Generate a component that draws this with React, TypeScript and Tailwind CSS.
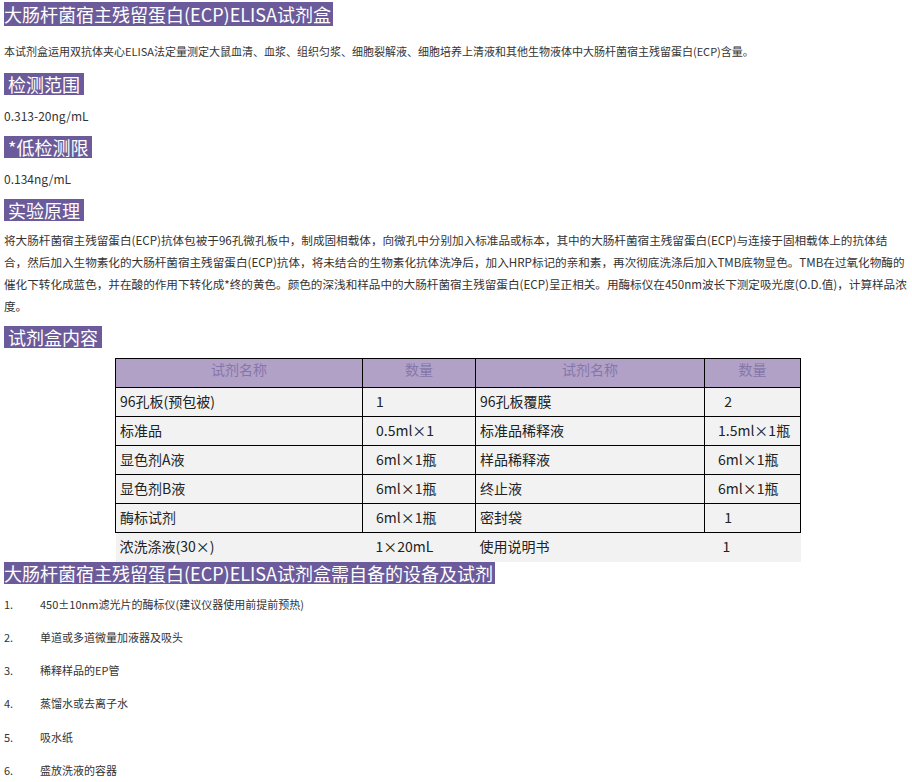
export default function App() {
  const font = { fontFamily: '"Noto Sans CJK SC", "Liberation Sans", sans-serif' }
  const H = ({ t, mt }: { t: string; mt: string }) => (
    <div className={`${mt} h-[22px]`}><span className="bg-[#6b5b9a] text-white text-[18px] leading-[22px] inline-block h-[22px] px-[4px]">{t}</span></div>
  )
  const rows = [
    ["96孔板(预包被)", "1", "96孔板覆膜", "  2"],
    ["标准品", "0.5ml×1", "标准品稀释液", "1.5ml×1瓶"],
    ["显色剂A液", "6ml×1瓶", "样品稀释液", "6ml×1瓶"],
    ["显色剂B液", "6ml×1瓶", "终止液", "6ml×1瓶"],
    ["酶标试剂", "6ml×1瓶", "密封袋", "  1"],
  ]
  const list = ["450±10nm滤光片的酶标仪(建议仪器使用前提前预热)", "单道或多道微量加液器及吸头", "稀释样品的EP管", "蒸馏水或去离子水", "吸水纸", "盛放洗液的容器"]
  return (
    <div className="w-[912px] h-[782px] overflow-hidden bg-white text-[#333] pl-[4px] pt-[2px]" style={font}>
      <div className="h-[24px]"><span className="bg-[#6b5b9a] text-white text-[18px] leading-[24px] inline-block h-[24px] pr-[2px]">大肠杆菌宿主残留蛋白(ECP)ELISA试剂盒</span></div>
      <p className="text-[11px] mt-[17px] leading-[16px] h-[16px]">本试剂盒运用双抗体夹心ELISA法定量测定大鼠血清、血浆、组织匀浆、细胞裂解液、细胞培养上清液和其他生物液体中大肠杆菌宿主残留蛋白(ECP)含量。</p>
      <H t=" 检测范围" mt="mt-[14px]" />
      <p className="text-[12px] mt-[13px] leading-[16px] h-[16px]">0.313-20ng/mL</p>
      <H t=" *低检测限" mt="mt-[12px]" />
      <p className="text-[12px] mt-[13px] leading-[16px] h-[16px]">0.134ng/mL</p>
      <H t=" 实验原理" mt="mt-[12px]" />
      <p className="text-[11.6px] leading-[22px] mt-[8px] pr-[2px] h-[88px]">将大肠杆菌宿主残留蛋白(ECP)抗体包被于96孔微孔板中，制成固相载体，向微孔中分别加入标准品或标本，其中的大肠杆菌宿主残留蛋白(ECP)与连接于固相载体上的抗体结合，然后加入生物素化的大肠杆菌宿主残留蛋白(ECP)抗体，将未结合的生物素化抗体洗净后，加入HRP标记的亲和素，再次彻底洗涤后加入TMB底物显色。TMB在过氧化物酶的催化下转化成蓝色，并在酸的作用下转化成*终的黄色。颜色的深浅和样品中的大肠杆菌宿主残留蛋白(ECP)呈正相关。用酶标仪在450nm波长下测定吸光度(O.D.值)，计算样品浓度。</p>
      <H t=" 试剂盒内容" mt="mt-[9px]" />
      <table className="ml-[111px] mt-[10px] border-collapse text-[14px] text-[#222] leading-[20px]">
        <thead>
          <tr className="bg-[#b2a1c7] text-[#8576aa] h-[29px]">
            {["试剂名称", "数量", "试剂名称", "数量"].map((h, i) => (
              <th key={i} className={`border border-black font-normal align-top ${["w-[247px]", "w-[113px]", "w-[229px]", "w-[96px]"][i]}`}>{h}</th>
            ))}
          </tr>
        </thead>
        <tbody>
          {rows.map((r, i) => (
            <tr key={i} className="bg-[#f2f2f2] h-[29px]">
              {r.map((c, j) => (
                <td key={j} className={`border border-black align-top px-[4px] pt-[3px] whitespace-pre ${j % 2 ? "pl-[13px]" : ""}`}>{c}</td>
              ))}
            </tr>
          ))}
          <tr className="bg-[#f2f2f2] h-[29px]">
            <td className="px-[4px] align-top pt-[3px]">浓洗涤液(30×)</td>
            <td className="pl-[13px] align-top pt-[3px]">1×20mL</td>
            <td className="px-[4px] align-top pt-[3px]">使用说明书</td>
            <td className="pl-[18px] align-top pt-[3px]">1</td>
          </tr>
        </tbody>
      </table>
      <div className="h-[22px]"><span className="bg-[#6b5b9a] text-white text-[18px] leading-[22px] inline-block h-[22px] pr-[2px]">大肠杆菌宿主残留蛋白(ECP)ELISA试剂盒需自备的设备及试剂</span></div>
      <div className="mt-[12px] text-[11px]">
        {list.map((t, i) => (
          <div key={i} className="flex h-[33.3px] items-start">
            <span className="w-[36px]">{i + 1}.</span><span>{t}</span>
          </div>
        ))}
      </div>
    </div>
  )
}
